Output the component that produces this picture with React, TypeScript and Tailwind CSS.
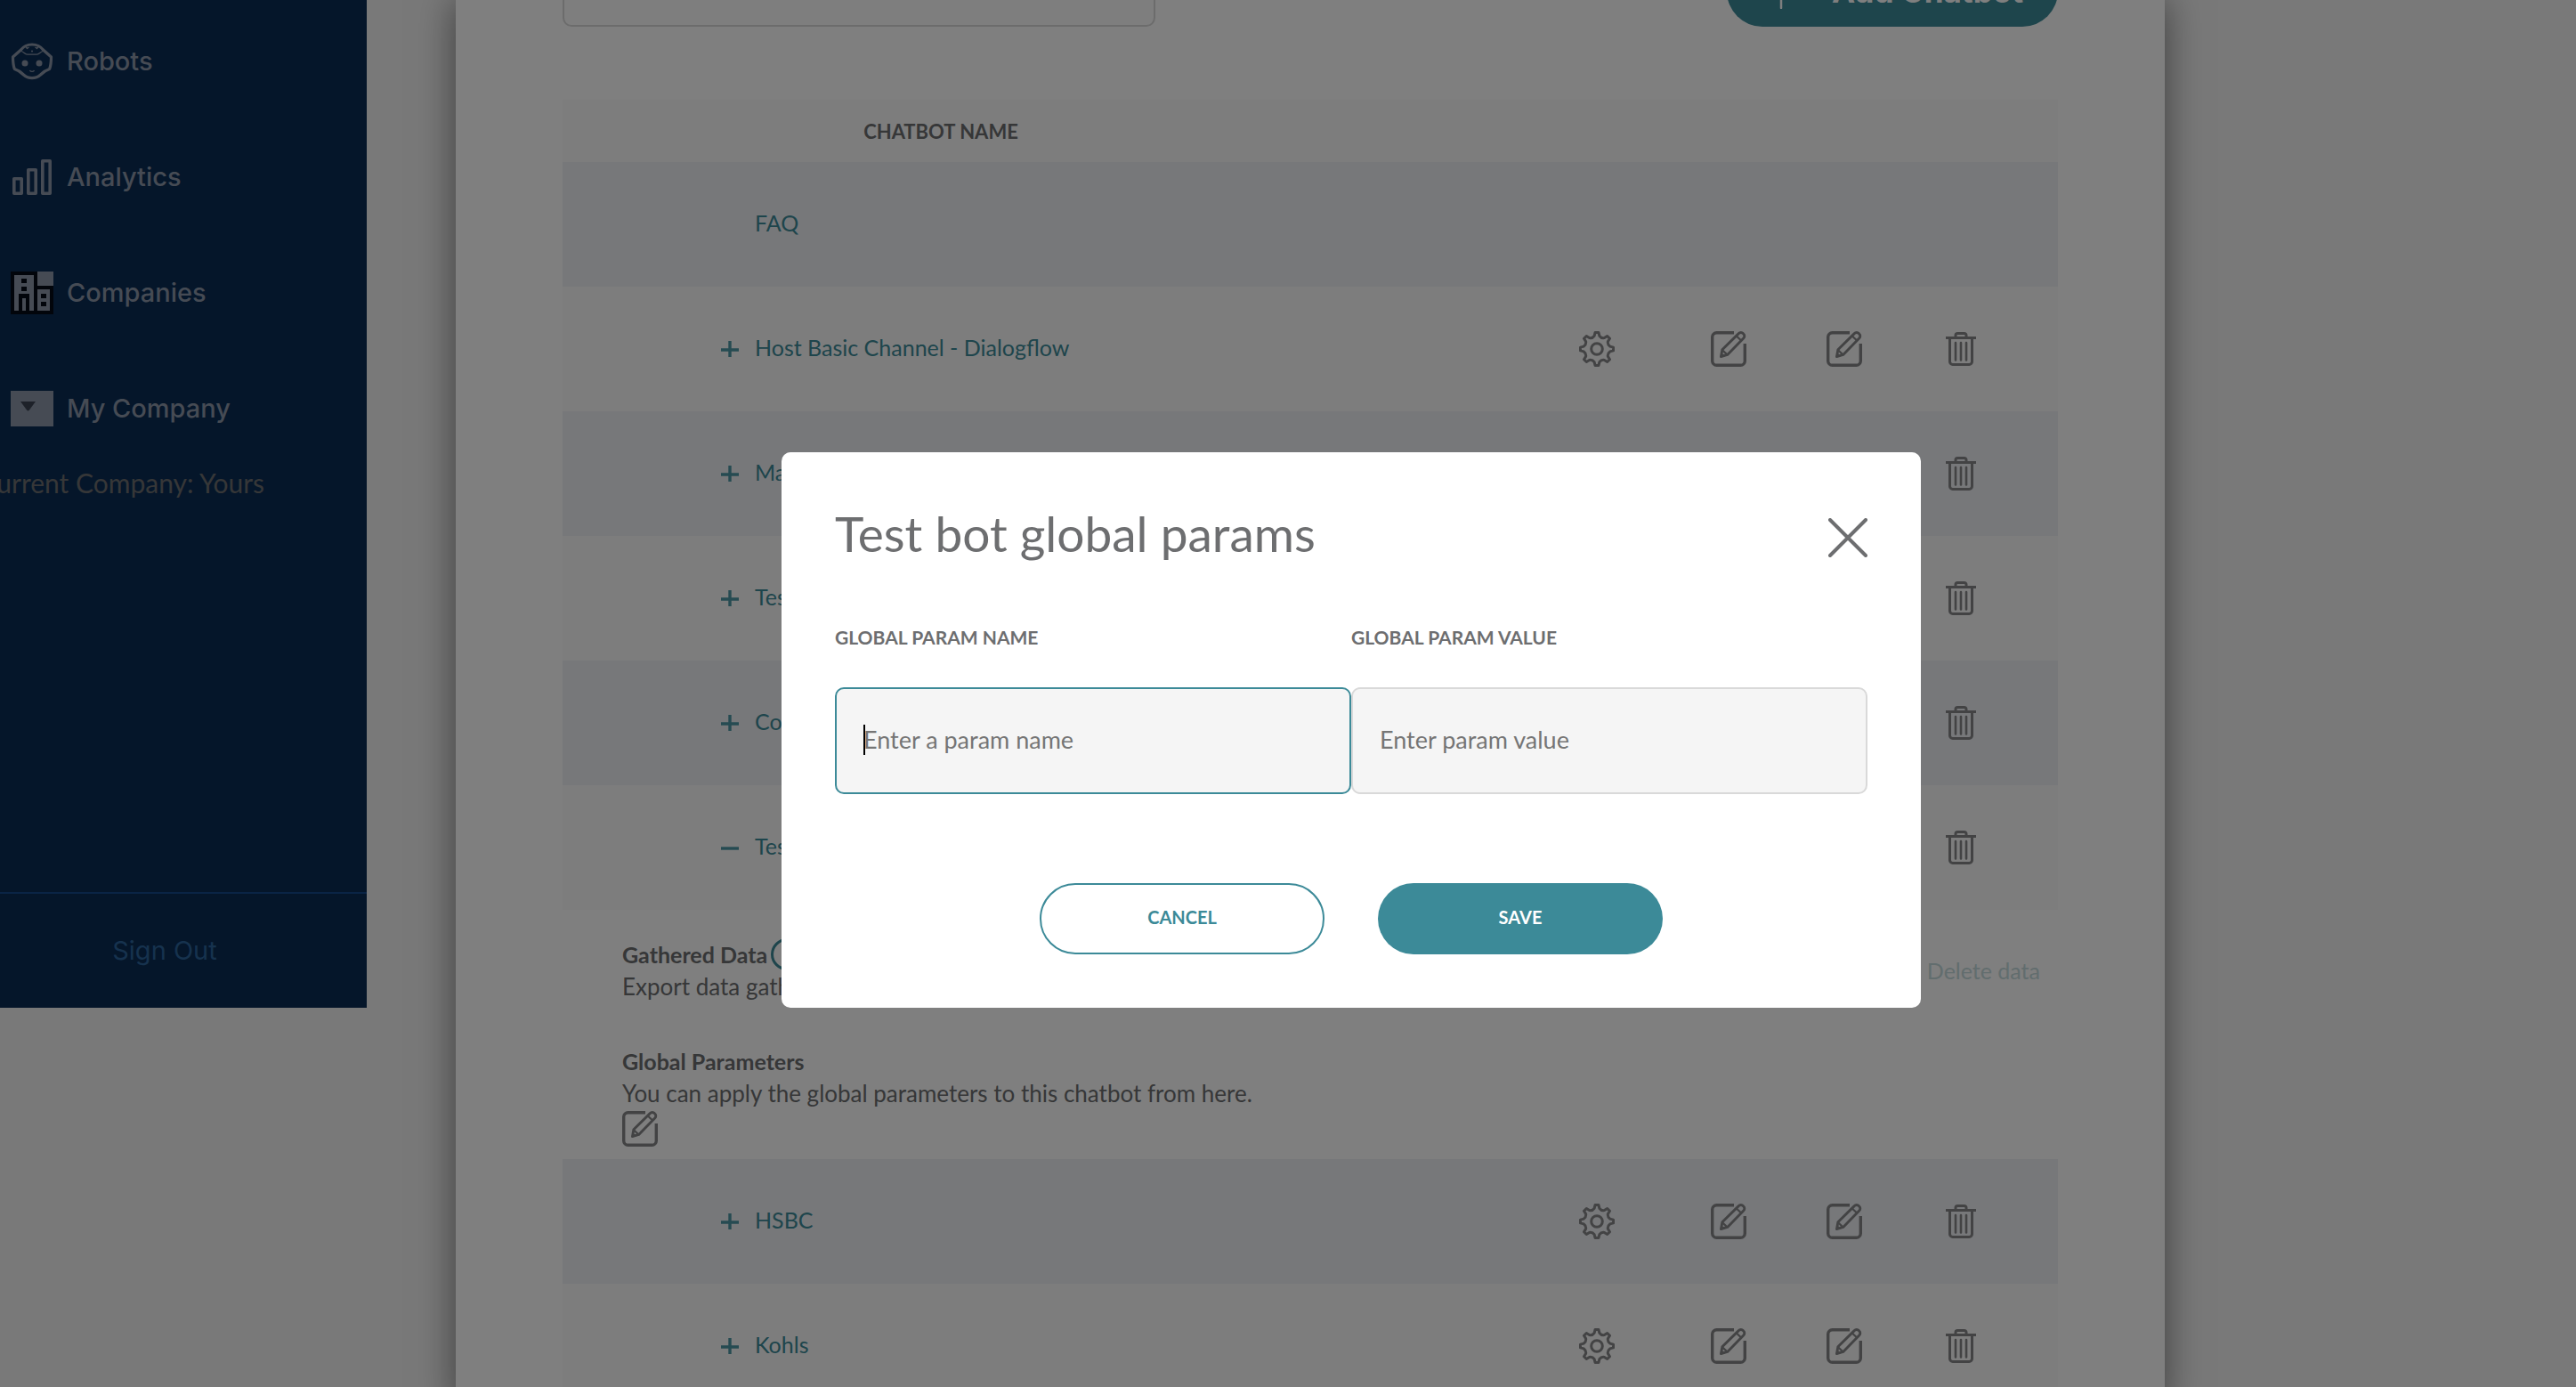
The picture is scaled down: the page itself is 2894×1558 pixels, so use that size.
import type { ReactNode } from "react";

type Bot = { name: string; state: "plain" | "closed" | "open" };

const bots: Bot[] = [
  { name: "FAQ", state: "plain" },
  { name: "Host Basic Channel - Dialogflow", state: "closed" },
  { name: "Main Bot", state: "closed" },
  { name: "Test Flow", state: "closed" },
  { name: "Concierge", state: "closed" },
  { name: "Test bot", state: "open" },
  { name: "HSBC", state: "closed" },
  { name: "Kohls", state: "closed" },
];

/* Outline of an eight-toothed cog centred on (20, 20). */
const cogPath =
  Array.from({ length: 8 }, (_, i) => {
    const at = (deg: number, r: number) => {
      const a = ((i * 45 + deg - 90) * Math.PI) / 180;
      return `${(20 + r * Math.cos(a)).toFixed(1)} ${(20 + r * Math.sin(a)).toFixed(1)}`;
    };
    return `${i ? "L" : "M"}${at(-6, 18.6)}L${at(6, 18.6)}L${at(11, 15)}Q${at(22.5, 12.8)} ${at(34, 15)}`;
  }).join("") + "Z";

function GearIcon() {
  return (
    <svg viewBox="0 0 40 40" className="size-10" fill="none" stroke="currentColor" strokeWidth="3" strokeLinejoin="round">
      <path d={cogPath} />
      <circle cx="20" cy="20" r="6.3" />
    </svg>
  );
}

function EditIcon() {
  return (
    <svg viewBox="0 0 40 40" className="size-10" fill="none" stroke="currentColor" strokeWidth="3.4" strokeLinejoin="round">
      <path d="M26 1.7H6.5a4.8 4.8 0 0 0-4.8 4.8v27a4.8 4.8 0 0 0 4.8 4.8h27a4.8 4.8 0 0 0 4.8-4.8V14" />
      <path strokeWidth="2.9" d="M11.5 28.5l1.4-7.7L31.3 2.6a3.4 3.4 0 0 1 5 0l.4.4a3.4 3.4 0 0 1 0 5L18.7 26.4 11.5 28.5z" />
      <path strokeWidth="2.2" d="M28.6 5.2l5.8 5.6M13 21.2l5.4 5.2" />
      <path fill="currentColor" stroke="none" d="M10.4 29.6l1.3-5.6 4.4 4.2z" />
    </svg>
  );
}

function TrashIcon() {
  return (
    <svg viewBox="0 0 34 38" className="h-[38px] w-[34px]" fill="none" stroke="currentColor" strokeWidth="3">
      <path d="M0 6.5h34M11 6V3.7a2.2 2.2 0 0 1 2.2-2.2h7.6A2.2 2.2 0 0 1 23 3.7V6M4.5 6.5V33.3a3.2 3.2 0 0 0 3.2 3.2h18.6a3.2 3.2 0 0 0 3.2-3.2V6.5" />
      <path strokeWidth="2.6" strokeLinecap="round" d="M11 12v19.5M17 12v19.5M23 12v19.5" />
    </svg>
  );
}

function ToggleIcon({ open }: { open: boolean }) {
  return (
    <svg viewBox="0 0 20 20" className="size-5" fill="none" stroke="currentColor" strokeWidth="3.4">
      <path d={open ? "M0 12h20" : "M0 12h20M10 2v18"} />
    </svg>
  );
}

function RobotIcon() {
  return (
    <svg viewBox="0 0 48 42" className="h-[42px] w-12" fill="none" stroke="currentColor" strokeWidth="3.2" strokeLinejoin="round">
      <path d="M24 2C18.5 2 14.5 4 11.5 8L2.5 16c0 6 .2 9 1.8 13.5C9 31 11 32.5 14.5 36c3 2.8 6 3.7 9.5 3.7s6.5-.9 9.5-3.7c3.5-3.5 5.5-5 10.2-6.5C45.3 25 45.5 22 45.500 16l-9-8C33.5 4 29.5 2 24 2z" />
      <path strokeWidth="1.3" d="M12 9.5c2.5.8 4 3.7 6.5 3.7h11c2.5 0 4-2.9 6.5-3.7M17 4.5l1.5 2 2-1.5M31 4.5l-1.5 2-2-1.5M21.500 31c.6 1.8 4.400 1.8 5 0" />
      <circle cx="16" cy="23" r="3.5" fill="currentColor" stroke="none" />
      <circle cx="32" cy="23" r="3.5" fill="currentColor" stroke="none" />
      <circle cx="24" cy="9.5" r="1" fill="currentColor" stroke="none" />
    </svg>
  );
}

function AnalyticsIcon() {
  return (
    <svg viewBox="0 0 48 40" className="h-10 w-12" fill="none" stroke="currentColor" strokeWidth="3.6" strokeLinejoin="round">
      <path d="M3.8 21.8h8.4v16.4H3.8zM19.8 11.8h8.4v26.4h-8.4zM35.8 1.8h8.4v36.4h-8.4z" />
    </svg>
  );
}

function CompaniesIcon() {
  return (
    <svg viewBox="0 0 48 48" className="size-12">
      <path fill="#040a16" d="M0 0h48v48H0z" />
      <path fill="currentColor" d="M30 0h18v16H30zM4 4h22v40h-5V25H9v19H4zM13 30h4v14h-4zM30 20h14v24H30z" />
      <path fill="#040a16" d="M12 8h6v5h-6zM12 17h6v5h-6zM34 25h6v5h-6zM34 34h6v5h-6z" />
    </svg>
  );
}

function MyCompanyIcon() {
  return (
    <svg viewBox="0 0 48 40" className="h-10 w-12">
      <path fill="currentColor" d="M0 0h48v40H0z" />
      <path fill="#3b4252" d="M11 12h17l-7 9.5q-1.5 2-3 0z" />
    </svg>
  );
}

function NavItem({ icon, label }: { icon: ReactNode; label: string }) {
  return (
    <a href="#" className="flex h-[130px] items-center gap-[15px] pl-3 text-[#8c97a9]">
      {icon}
      {label}
    </a>
  );
}

function Sidebar() {
  return (
    <aside className="flex h-[1132px] w-[412px] shrink-0 flex-col bg-[#0a2c54] pt-1 font-['Inter',sans-serif] text-[29px]">
      <nav className="font-medium">
        <NavItem icon={<RobotIcon />} label="Robots" />
        <NavItem icon={<AnalyticsIcon />} label="Analytics" />
        <NavItem icon={<CompaniesIcon />} label="Companies" />
        <NavItem icon={<MyCompanyIcon />} label="My Company" />
      </nav>
      <p className="flex w-[297px] justify-end font-['Lato',sans-serif] text-[30px] leading-9 whitespace-nowrap text-[#6d6e70]">
        Current Company: Yours
      </p>
      <a href="#" className="mt-auto flex h-[130px] items-center justify-center border-t-2 border-[#14488a] pr-[42px] text-[#2c649c]">
        Sign Out
      </a>
    </aside>
  );
}

function BotDetails() {
  return (
    <tr className="bg-white">
      <td colSpan={7} className="pt-8 pr-5 pb-[14px] pl-[67px] leading-9">
        <div className="flex items-center justify-between">
          <div>
            <h3 className="flex items-center gap-1 text-[25px] font-bold">
              Gathered Data
              <span className="flex size-9 items-center justify-center rounded-full border-3 border-[#3c8a98] text-xl text-[#3c8a98]">i</span>
            </h3>
            <p>Export data gathered by this chatbot.</p>
          </div>
          <button type="button" disabled className="text-[25px] text-[#c4dadc]">Delete data</button>
        </div>
        <h3 className="mt-12 text-[25px] font-bold">Global Parameters</h3>
        <p>You can apply the global parameters to this chatbot from here.</p>
        <button type="button" aria-label="Edit global parameters" className="mt-[2px] block text-[#868789]">
          <EditIcon />
        </button>
      </td>
    </tr>
  );
}

function IconCell({ label, children }: { label: string; children: ReactNode }) {
  return (
    <td>
      <button type="button" aria-label={label} className="mx-auto block text-[#868789]">{children}</button>
    </td>
  );
}

function BotRow({ bot }: { bot: Bot }) {
  const plain = bot.state === "plain";
  return (
    <tr className="h-[140px]">
      <td colSpan={2} className="pl-[178px] text-[25px] text-[#3c8a98]">
        <a href="#" className="flex items-center gap-[18px] pb-[2px]">
          <span className="size-5 text-[#4c97a4]">{!plain && <ToggleIcon open={bot.state === "open"} />}</span>
          {bot.name}
        </a>
      </td>
      {plain ? (
        <td colSpan={5} />
      ) : (
        <>
          <IconCell label={`Settings for ${bot.name}`}><GearIcon /></IconCell>
          <IconCell label={`Edit flow of ${bot.name}`}><EditIcon /></IconCell>
          <IconCell label={`Edit ${bot.name}`}><EditIcon /></IconCell>
          <IconCell label={`Delete ${bot.name}`}><TrashIcon /></IconCell>
          <td />
        </>
      )}
    </tr>
  );
}

function BotTable() {
  return (
    <table className="mt-[82px] w-full table-fixed">
      <colgroup>
        <col className="w-[850px]" />
        <col />
        <col className="w-[148px]" />
        <col className="w-[148px]" />
        <col className="w-[112px]" />
        <col className="w-[150px]" />
        <col className="w-[34px]" />
      </colgroup>
      <thead>
        <tr className="h-[70px] bg-[#fafafa]">
          <th scope="col" className="text-[22px] font-bold">CHATBOT NAME</th>
          <td colSpan={6} />
        </tr>
      </thead>
      {bots.map((bot) => (
        <tbody key={bot.name} className="odd:bg-[#eef0f4] even:bg-[#fafafa]">
          <BotRow bot={bot} />
          {bot.state === "open" && <BotDetails />}
        </tbody>
      ))}
    </table>
  );
}

function Field({ id, label, placeholder, focused }: { id: string; label: string; placeholder: string; focused?: boolean }) {
  return (
    <div className="flex-1">
      <label htmlFor={id} className="block text-[21px] leading-9 font-bold">{label}</label>
      <div className="relative mt-[38px]">
        <input
          id={id}
          type="text"
          placeholder={placeholder}
          autoFocus={focused}
          className="h-[120px] w-full rounded-[10px] border-2 border-[#d9d9d9] bg-[#f5f5f5] px-[30px] pb-1 text-[27px] caret-transparent outline-none placeholder:text-[#757575] focus:border-[#3c8a98]"
        />
        {focused && <span className="absolute top-[42px] left-8 h-[34px] w-[2px] bg-black" />}
      </div>
    </div>
  );
}

function ParamsDialog() {
  return (
    <div className="fixed inset-0 flex items-start justify-center bg-black/50 pt-[508px] pl-[142px]">
      <section role="dialog" aria-modal="true" aria-labelledby="dialog-title" className="w-[1280px] rounded-[10px] bg-white px-[60px] pt-[58px] pb-[60px] text-[#6d6e70]">
        <header className="flex items-end justify-between">
          <h2 id="dialog-title" className="text-[55px] leading-[66px]">Test bot global params</h2>
          <button type="button" aria-label="Close" className="pb-1.5">
            <svg viewBox="0 0 44 44" className="size-11" fill="none" stroke="currentColor" strokeWidth="4" strokeLinecap="round">
              <path d="M2 2l40 40M42 2L2 42" />
            </svg>
          </button>
        </header>
        <form>
          <div className="mt-[66px] flex">
            <Field id="param-name" label="GLOBAL PARAM NAME" placeholder="Enter a param name" focused />
            <Field id="param-value" label="GLOBAL PARAM VALUE" placeholder="Enter param value" />
          </div>
          <div className="mt-[100px] flex justify-center gap-[60px] text-[20px] font-bold">
            <button type="button" className="h-20 w-80 rounded-full border-2 border-[#3c8a98] pb-1 text-[#3c8a98]">CANCEL</button>
            <button type="button" className="h-20 w-80 rounded-full bg-[#3c8a98] pb-1 text-white">SAVE</button>
          </div>
        </form>
      </section>
    </div>
  );
}

export default function App() {
  return (
    <div className="flex h-screen items-start overflow-hidden bg-[#f2f2f2] font-['Lato',sans-serif] text-[26px] text-[#6d6e70]">
      <Sidebar />
      <main className="mr-[462px] ml-[100px] min-h-screen flex-1 bg-white px-[120px] shadow-[0_0_40px_rgba(0,0,0,0.5)]">
        <div className="-mt-[50px] flex justify-between">
          <input
            type="search"
            aria-label="Search chatbots"
            placeholder="Search for a chatbot..."
            className="h-20 w-[666px] rounded-[10px] border-2 border-[#d9d9d9] bg-[#fcfcfc] px-[30px] pb-1 text-[27px]"
          />
          <button type="button" className="flex h-20 w-[372px] items-center gap-[37px] rounded-full bg-[#3c8a98] pl-[41px] font-['Inter',sans-serif] text-[35px] font-bold whitespace-nowrap text-white">
            <svg viewBox="0 0 40 40" className="size-10" fill="none" stroke="currentColor" strokeWidth="2.5" strokeLinecap="round">
              <path d="M20 1v38M1 20h38" />
            </svg>
            Add Chatbot
          </button>
        </div>
        <BotTable />
      </main>
      <ParamsDialog />
    </div>
  );
}
